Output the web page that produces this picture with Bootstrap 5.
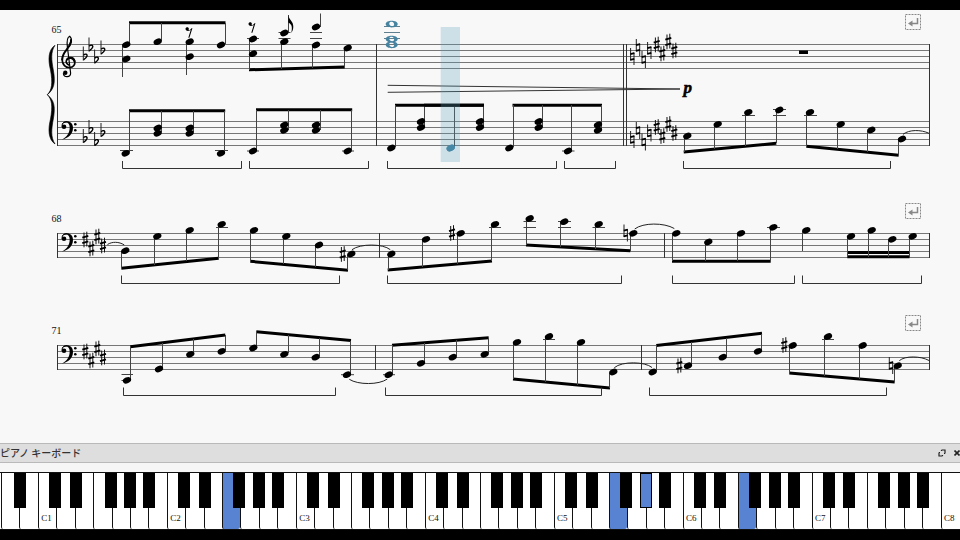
<!DOCTYPE html>
<html lang="ja">
<head>
<meta charset="utf-8">
<meta name="viewport" content="width=device-width, initial-scale=1">
<title>ピアノ キーボード</title>
<link href="https://cdn.jsdelivr.net/npm/bootstrap@5.3.0/dist/css/bootstrap.min.css" rel="stylesheet">
<style>
  body { background: #000; font-family: "Liberation Sans", "Noto Sans CJK JP", sans-serif; }
  .page-wrap { padding-top: 10px; }
  .paper { background: #f8f8f8; }
  .paper text { font-family: "Liberation Serif", serif; font-size: 10px; fill: #111; }
  .paper .dynamic { font-size: 17px; font-weight: 700; font-style: italic; fill: #000; stroke: #000; stroke-width: .5; }
  .staff { fill: none; stroke: #777; stroke-width: 1; }
  .barline, .pedal, .hairpin { fill: none; stroke: #333; stroke-width: 1; }
  .stem { fill: none; stroke: #444; stroke-width: 1; }
  .ledger { fill: none; stroke: #444; stroke-width: 1; }
  .beam { fill: none; stroke: #000; stroke-width: 3; }
  .tie { fill: none; stroke: #222; stroke-width: 1; }
  .heads, .sharps, .flats, .naturals, .wholes { fill: none; stroke: none; }
  .heads { marker: url(#head); }
  .sharps { marker: url(#sharp); }
  .flats { marker: url(#flat); }
  .naturals { marker: url(#natural); }
  .wholes { marker: url(#whole); }
  .now-heads { fill: none; marker: url(#headNow); }
  .now { stroke: #4683a0; }
  .ledger.wide { stroke: #5f7f8f; }
  .dock { background: #f6f6f6; }
  .dock-title { background: #dedede; border-top: 1px solid #b9b9b9; border-bottom: 1px solid #b9b9b9; height: 20px; color: #333; font-family: "Noto Sans CJK JP", sans-serif; }
  .dock-title h1 { font-size: 10px; line-height: 18px; font-weight: 500; }
  .tool { border: 0; background: none; padding: 0; height: 18px; width: 8px; display: flex; align-items: center; justify-content: center; color: #222; }
  .tool.close-tool { width: 6px; margin-left: 8px; }
  .keys { margin-top: 9px; border-top: 1px solid #111; height: 58px; padding: 0 1px; background: #fff; border-bottom: 1px solid #111; }
  .slot { position: relative; flex: 1 1 0; min-width: 0; }
  .ivory { width: 100%; height: 100%; border: 0; border-left: 1px solid #111; border-radius: 0 0 2px 2px; background: #fff; padding: 0 2px 6px 0; display: flex; align-items: flex-end; justify-content: center; font: 9px/10px "Liberation Serif", serif; color: #111; }
  .ebony { position: absolute; z-index: 2; top: 0; left: 100%; width: 12px; height: 35px; border: 1px solid #000; background: #000; padding: 0; }
  .lean-left { margin-left: -7px; }
  .lean-mid { margin-left: -6px; }
  .lean-right { margin-left: -5px; }
  .down { background: #5783d2; }
</style>
<script src="https://cdn.jsdelivr.net/npm/bootstrap@5.3.0/dist/js/bootstrap.bundle.min.js"></script>
</head>
<body>
<div class="page-wrap">
<main class="paper">
<svg class="d-block w-100 h-auto" viewBox="0 10 960 433" role="img" aria-label="Piano score, measures 65 to 73">
  <defs>
    <marker id="head" markerUnits="userSpaceOnUse" markerWidth="10" markerHeight="10" overflow="visible"><ellipse rx="4.300" ry="3" transform="rotate(-24)" fill="#000"/></marker>
    <marker id="headNow" markerUnits="userSpaceOnUse" markerWidth="10" markerHeight="10" overflow="visible"><ellipse rx="4.300" ry="3" transform="rotate(-24)" fill="#3f7e9e"/></marker>
    <marker id="whole" markerUnits="userSpaceOnUse" markerWidth="14" markerHeight="10" overflow="visible"><path fill="#4683a0" fill-rule="evenodd" d="M-6 0C-6 -4.500 6 -4.500 6 0C6 4.500 -6 4.500 -6 0ZM-2.400 -1C-3 1 -.6 2.600 1 2.200C3.400 1.600 2.600 -2 .2 -2.300C-1 -2.400 -2 -2 -2.400 -1Z"/></marker>
    <marker id="sharp" markerUnits="userSpaceOnUse" markerWidth="8" markerHeight="18" overflow="visible"><path fill="none" stroke="#111" d="M-1.300 -7V7.800M1.500 -7.800V7"/><path stroke="#000" stroke-width="1.900" d="M-3 -1.800L3 -3.600M-3 3.600L3 1.800"/></marker>
    <marker id="flat" markerUnits="userSpaceOnUse" markerWidth="8" markerHeight="18" overflow="visible"><path fill="none" stroke="#222" stroke-width="1" d="M-1.700 -10V4"/><path fill="none" stroke="#000" stroke-width="1.400" d="M-1.500 -1.300C0 -3 2.600 -2.500 2 -.4C1.600 1 .2 2.200 -1.500 3.300"/></marker>
    <marker id="natural" markerUnits="userSpaceOnUse" markerWidth="8" markerHeight="18" overflow="visible"><path fill="none" stroke="#222" d="M-1.700 -8.500V4M1.700 -4V8.500"/><path stroke="#000" stroke-width="2" d="M-2 -2.400L2 -3.400M-2 3.400L2 2.400"/></marker>
    <g id="bassClef"><path d="M62 125C62.500 119.500 73 119.500 73 127.700C73 134.500 68 138 62 139.500C67 136.500 69.700 133 69.700 127.400C69.700 121.500 64.500 121.500 62 125Z"/><circle cx="64" cy="126.800" r="2.300"/><path d="M62.200 127C61.500 122 65 121.700 67 121.800" fill="none" stroke="#000"/><circle cx="75.300" cy="124.300" r="1.300"/><circle cx="75.300" cy="130.200" r="1.300"/></g>
    <g id="breakIcon" fill="none" stroke="#888"><rect x=".5" y=".5" width="15" height="15" stroke-dasharray="2 1"/><path stroke-width="1.500" d="M12.500 4V9.500H6"/><path fill="#888" stroke="none" d="M3 9.500L7.500 6.500V12.500Z"/></g>
    <path id="rest" d="M-3.500 -3.500A1.700 1.700 0 1 1 -.5 -2.500C1 -2.500 2 -3.500 2.800 -4.600L3.400 -4.300L.4 5.300H-.7L1.700 -2.500C.5 -1.500 -3 -.8 -3.500 -3.500Z"/>
  </defs>

  <!-- staves -->
  <path class="staff" d="M57 44.500H930M57 50.500H930M57 56.500H930M57 62.500H930M57 68.500H930
    M57 121.500H930M57 127.500H930M57 133.500H930M57 139.500H930M57 145.500H930
    M57 233.500H930M57 239.500H930M57 245.500H930M57 251.500H930M57 257.500H930
    M57 345.500H930M57 351.500H930M57 357.500H930M57 363.500H930M57 369.500H930"/>
  <path class="barline" d="M57.500 44V146M376.500 44V146M623.500 44V146M626.500 44V146M929.500 44V146
    M57.500 233V258M379.500 233V258M664.500 233V258M929.500 233V258
    M57.500 345V370M375.500 345V370M641.500 345V370M929.500 345V370"/>
  <path stroke="#000" stroke-width=".6" d="M55 45.300C48 50 48 60 50.500 70C52.800 83 52 90 47.300 94.700C52 99.400 52.800 106 50.500 119C48 129 48 139 55 144C50.500 137 51.500 129 53.300 119C55.700 106 54 100 47.300 94.700C54 89.400 55.700 83 53.300 70C51.500 60 50.500 52 55 45.300Z"/>

  <!-- clefs -->
  <g fill="none" stroke="#000" stroke-linecap="round">
    <path stroke-width="1.200" d="M70.600 73C70.800 77.600 63.500 78 63.400 73.500M70.600 73L67.400 47C66.700 41 67.700 37 69.700 36.300C72 38.500 71.800 42.500 69.500 46.300"/>
    <path stroke-width="2" d="M70.600 42.500C69.500 49 62.300 51.500 62.200 59.500M71 40V42"/>
    <path stroke-width="1.600" d="M62.200 59C62 65 66 67.700 69.500 67.500C73.500 67.300 75.500 64.500 74.700 60.800C73.500 56.500 68 56.500 66.500 60C65.500 62.500 67 64.300 68.800 65"/>
    <path stroke-width="2" d="M74.500 61.500C73.500 57.500 69 57 67.200 59.500"/>
  </g>
  <circle cx="65.300" cy="72.700" r="2.200"/>
  <use href="#bassClef"/>
  <use href="#bassClef" y="112"/>
  <use href="#bassClef" y="224"/>

  <!-- key signatures and accidentals -->
  <polyline class="flats" points="85,56.500 90.700,47.500 96.300,59.500 102.700,50.500"/>
  <polyline class="flats" points="85,139 90.700,130 96.300,142 102.700,133"/>
  <polyline class="naturals" points="632.300,56.500 638,47.500 643.700,59.500 649.300,50.500"/>
  <polyline class="naturals" points="632.300,139.500 638,130.500 643.700,142 649.300,133"/>
  <polyline class="sharps" points="656.700,44.500 662.300,53.500 668.300,41.500 674.300,50.500"/>
  <polyline class="sharps" points="656.700,127 662.300,136 668.300,124 674.300,133"/>
  <polyline class="sharps" points="85.300,239.500 91.300,248.500 97.300,236.500 103,245.500"/>
  <polyline class="sharps" points="85.300,351.500 91.300,360.500 97.300,348.500 103,357.500"/>
  <polyline class="sharps" points="342.700,254 452,233 679.300,365.500 784.300,345"/>
  <polyline class="naturals" points="625.700,233 891,365.500"/>

  <!-- measures 65-67, upper staff -->
  <path class="beam" d="M129 22.700H225.500M249 69.800L344.700 67"/>
  <path class="stem" d="M129.500 23V44M161.500 23V41M225.500 23V44M122.500 44V77M186.500 41V75
    M249.500 39V70M281.500 42V69M312.500 45V68M344.500 48V67M288.500 33V15M320.500 27V13.500"/>
  <path d="M288.300 15C289 20 293.500 21 293.300 27C293.200 30 292 32 291.300 33C292.500 27 292 24.500 288.300 22.500Z"/>
  <path class="ledger" d="M247 38.500H259M278.500 38.500H290.500M278.500 32.500H290.500M310 38.500H322M310 32.500H322"/>
  <polyline class="heads" points="126.300,44.700 126.300,59 157.700,41.700 189.700,41.700 189.700,56.700 221,45 253,39 253,53.700 284.300,33 284.300,41.700 316,27 316,45 347.700,48"/>
  <use href="#rest" x="189" y="32.500"/>
  <use href="#rest" x="252" y="27.500"/>
  <path class="ledger wide" d="M384 26.500H400M384 32.500H400M384 38.500H400"/>
  <polyline class="wholes" points="391.700,24 391.700,39 391.700,44.800"/>
  <rect x="799" y="50.500" width="9" height="3.500"/>

  <path class="hairpin" d="M387.700 85.300L680 89L387.700 92.300"/>
  <text class="dynamic" x="683.500" y="92.500">p</text>

  <!-- measures 65-67, lower staff -->
  <path class="beam" d="M129 110.700H225.200M256 109.700H352.200M395 105.200H484M512.500 105.200H602
    M683.700 152L776.300 143.300M806.300 146.300L898.700 155.300"/>
  <path class="stem" d="M129.500 111V152M161.500 111V132M193.500 111V132M224.500 111V152
    M256.500 110V150M288.500 110V130M320.500 110V130M351.500 110V150
    M395.500 105V147M424.500 105V127M483.500 105V127M513.500 105V147M542.500 105V127M571.500 105V150M601.500 105V130
    M684.500 137V152M714.500 125V149M745.500 113V146M776.500 111V143M806.500 113V146M837.500 125V149M867.500 131V152M898.500 140V155"/>
  <path class="stem" d="M454.500 107V147"/>
  <path class="beam" d="M424 105.200H454"/>
  <path class="ledger" d="M120 150.500H133M215 150.500H228M247 151H259M342 151H354M562 151H574.500
    M742 115.500H755M773 115.500H786M773 109.500H786M804 115.500H817"/>
  <polyline class="heads" points="125.700,153.300 157.700,128 157.700,133.300 189.700,128 189.700,133.300 221,153.300 253,151 284.300,125 284.300,130.300 316,125 316,130.300 347.700,151"/>
  <polyline class="heads" points="391.300,148 421,121.500 421,127.500 480,121.500 480,127.500 509.300,148 538.700,121.500 538.700,127.500 568,151 598,124.700 598,130.300"/>
  <polyline class="heads" points="687.300,136 717.700,124.300 748.300,112.300 779.300,110 810,112.300 840.700,124.300 871.300,130 902,139"/>
  <polyline class="now-heads" points="450.700,148 450.700,148"/>
  <path class="tie" d="M903 134.300C909 129.500 921 129.500 929 133.300"/>

  <!-- measures 68-70 -->
  <path class="beam" d="M121.300 268.300L218.700 258.300M250.300 261.300L348 270.300M387.700 270L492 261M526 245L630.300 250.700
    M672 261.300H770.700M847.300 252.500H909.500M847.300 256.800H909.500"/>
  <path class="stem" d="M121.500 251V268M154.500 237V265M186.500 231V261M218.500 225V258
    M250.500 231V262M283.500 237V264M315.500 246V267M347.500 255V270
    M388.500 255V270M422.500 240V267M457.500 234V264M491.500 225V261
    M526.500 219V245M560.500 222V247M595.500 225V249M630.500 234V251
    M672.500 234V261M705.500 243V261M737.500 234V261M770.500 228V261M802.500 231V251
    M847.500 237V257M868.500 231V257M888.500 240V257M909.500 237V257"/>
  <path class="ledger" d="M216 227.500H228M489 227.500H501M523.500 221.500H536M523.500 227.500H536M558 221.500H571M558 227.500H571M592.500 227.500H605M767 227.500H780"/>
  <polyline class="heads" points="125.300,250.700 157.300,236.300 189.700,230.300 221.700,224.300 254,230.300 286.300,236.300 319,245 351.300,254"/>
  <polyline class="heads" points="391.300,254 426,239.300 460.700,233.300 495,224.300 529.700,218.500 564.300,221.700 598.700,224.300 633.300,233.300"/>
  <polyline class="heads" points="676.300,233.300 708.300,242 741,233.300 773.300,227.300 806.300,230.300 851,236.300 871.700,230.300 892.300,239.300 912.700,236.300"/>
  <path class="tie" d="M107.500 244.500C112 241.500 119 241.500 124.300 245M352 249.700C360 243.500 383 243.500 390.300 249.700M634.700 229C643 222.500 664 222.500 674.300 228.500"/>

  <!-- measures 71-73 -->
  <path class="beam" d="M130.300 346.700L225.300 335M256.300 331.700L351 340.500M392 345.200L488.700 337.700M513 379L610 388M656.300 345.500L762 333.300M789.300 373L894.700 382"/>
  <path class="stem" d="M130.500 347V380M162.500 343V368M193.500 339V353M225.500 335V350
    M256.500 331V347M288.500 335V353M319.500 338V356M350.500 341V374
    M392.500 345V374M424.500 343V362M456.500 340V356M488.500 338V353
    M513.500 343V379M545.500 338V382M577.500 343V385M609.500 373V388
    M656.500 345V371M691.500 342V365M726.500 338V356M761.500 334V350
    M789.500 346V373M824.500 337V376M859.500 346V379M894.500 366V382"/>
  <path class="ledger" d="M121.500 374.500H133M121.500 380.500H131M341 374.700H354M383 374.700H395M543 339.500H555M822 339.500H834"/>
  <polyline class="heads" points="127,380.300 159,369 190.300,354.300 221.700,351.300 253.300,348 284.300,354.300 315.700,357.200 347,374.700"/>
  <polyline class="heads" points="388.700,374.700 421,363.300 452.700,357.200 484.700,354.300 517,342.300 549,336.500 581,342.300 613.300,372"/>
  <polyline class="heads" points="652.700,372 688,365.700 722.700,357.200 758,351.300 792.700,345.500 828,336.500 862.700,345.500 897.700,365.700"/>
  <path class="tie" d="M349.300 379.300C358 385 379 385 387.300 379M614.300 367.700C622 361 645 361.500 652 367.500M899.300 360.700C905 355.500 921 356 929 360.500"/>

  <!-- pedal brackets -->
  <path class="pedal" d="M122.500 161V168.500H241.500V161M249.500 161V168.500H368.500V161M387.500 161V168.500H556.500V161M564.500 161V168.500H615.500V161M683.500 161V168.500H890.500V161
    M121.500 275.500V283.500H339.500V275.500M387.500 275.500V283.500H621.500V275.500M672.500 275.500V283.500H794.500V275.500M802.500 275.500V283.500H921.500V275.500
    M123.500 387.500V395.500H335.500V387.500M385.500 387.500V395.500H601.500V387.500M649.500 387.500V395.500H886.500V387.500"/>

  <text x="51.500" y="32.500">65</text>
  <text x="51.500" y="221.500">68</text>
  <text x="51.500" y="333.500">71</text>
  <use href="#breakIcon" x="905" y="14"/>
  <use href="#breakIcon" x="905" y="203"/>
  <use href="#breakIcon" x="905" y="315"/>

  <!-- the beam runs on across the sounding note, under the playback cursor -->
  <path class="beam" d="M454 105.200H484"/>
  <rect x="440.700" y="27" width="19.300" height="135" fill="#5fa3c0" fill-opacity=".28"/>
</svg>
</main>

<section class="dock" aria-label="ピアノ キーボード">
  <div class="dock-title d-flex align-items-center">
    <h1 class="m-0 me-auto">ピアノ キーボード</h1>
    <button type="button" class="tool" aria-label="Undock"><svg width="8" height="8" viewBox="0 0 8 8" fill="none" stroke="currentColor" stroke-width="1.200"><path d="M3.500 1H7V4.500M1 3.500V7H4.500M3.500 1V2M1 3.500H2M4.500 7V6M7 4.500H6"/></svg></button>
    <button type="button" class="tool close-tool" aria-label="Close"><svg width="6" height="6" viewBox="0 0 6 6" stroke="currentColor" stroke-width="1.600"><path d="M.5 .5L5.500 5.500M5.500 .5L.5 5.500"/></svg></button>
  </div>
  <div class="keys d-flex" id="keys"></div>
</section>
</div>

<script>
  // 88 keys: each slot holds a white key and, where there is one, the black key to its right
  const names = ['A', 'B', 'C', 'D', 'E', 'F', 'G'];
  const lean = { C: 'lean-left', D: 'lean-right', F: 'lean-left', G: 'lean-mid', A: 'lean-right' };
  const held = new Set(['F2', 'F5', 'G#5', 'F6']);
  const keys = document.getElementById('keys');
  function makeKey(kind, note) {
    const key = document.createElement('button');
    key.type = 'button';
    key.className = kind + (held.has(note) ? ' down' : '');
    key.setAttribute('aria-label', note);
    return key;
  }
  for (let i = 0; i < 52; i++) {
    const name = names[i % 7];
    const octave = Math.floor((i + 5) / 7);
    const slot = document.createElement('div');
    slot.className = 'slot';
    const white = makeKey('ivory', name + octave);
    if (name === 'C') white.textContent = name + octave;
    slot.append(white);
    if (lean[name] && i < 51) {
      const black = makeKey('ebony', name + '#' + octave);
      black.classList.add(lean[name]);
      slot.append(black);
    }
    keys.append(slot);
  }
</script>
</body>
</html>
